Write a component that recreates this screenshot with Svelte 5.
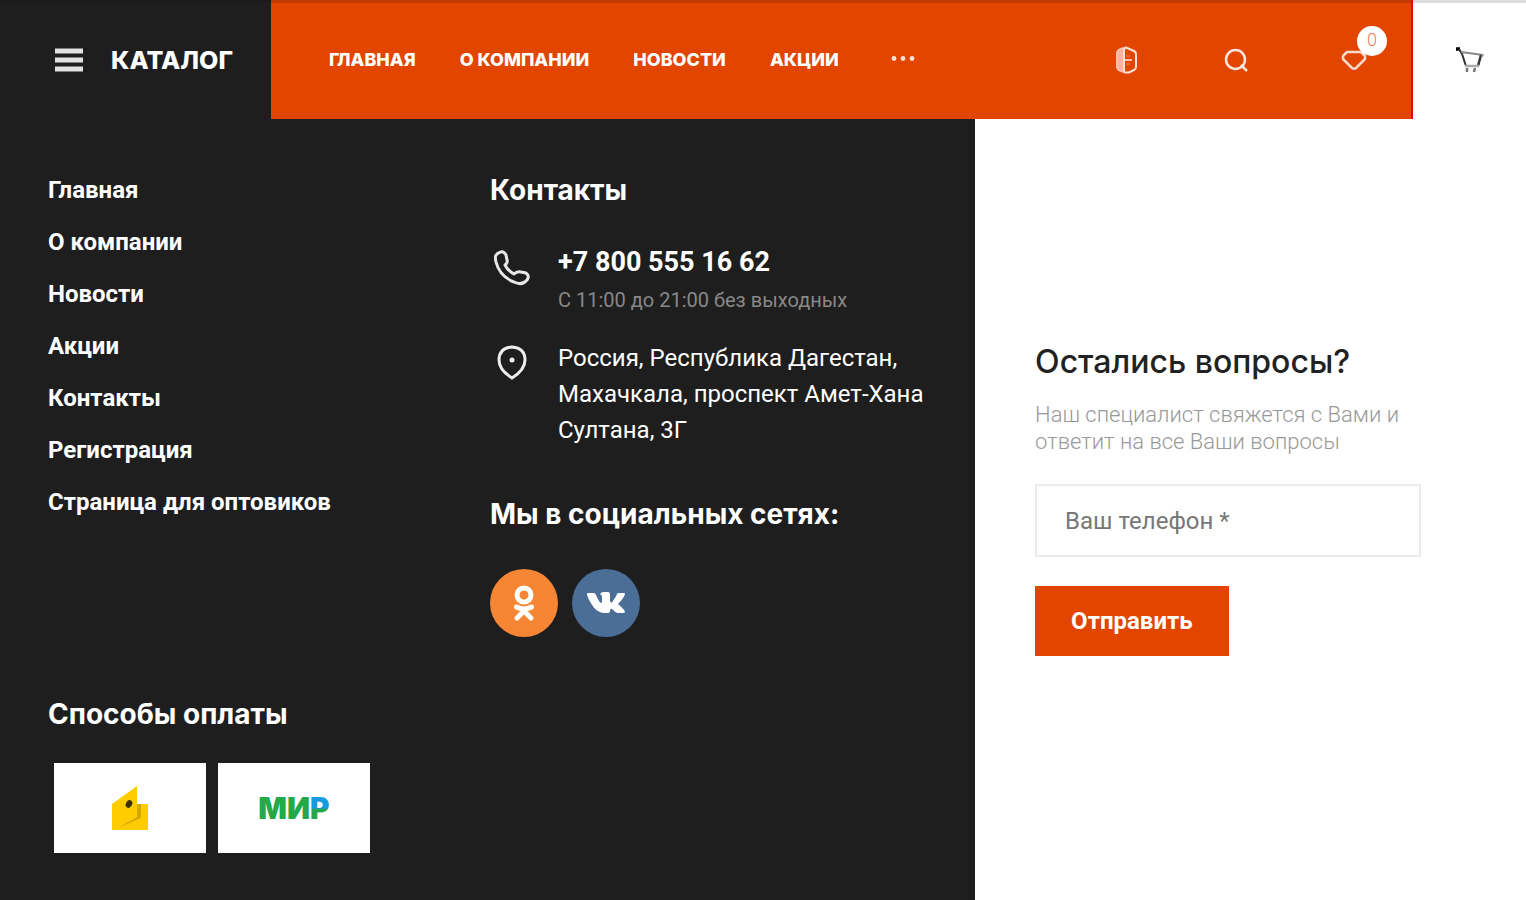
<script>
  const nav = ['Главная', 'О компании', 'Новости', 'Акции'];
  const menu = ['Главная', 'О компании', 'Новости', 'Акции', 'Контакты', 'Регистрация', 'Страница для оптовиков'];
  let phone = $state('');
</script>

<div class="page">
  <header>
    <button class="catalog" type="button">
      <svg width="28" height="24" viewBox="0 0 28 24" aria-hidden="true">
        <path d="M0 3h28M0 12h28M0 21h28" stroke="#e2e2e2" stroke-width="5" />
      </svg>
      Каталог
    </button>
    <div class="bar">
      <nav>
        {#each nav as item}
          <a href="#top">{item}</a>
        {/each}
        <button class="more" type="button" aria-label="Ещё">
          <svg width="24" height="8" viewBox="0 0 24 8" fill="#ffe3d8">
            <circle cx="3" cy="2.500" r="2.400" /><circle cx="12" cy="2.500" r="2.400" /><circle cx="21" cy="2.500" r="2.400" />
          </svg>
        </button>
      </nav>
      <div class="tools">
        <button type="button" aria-label="Сравнение">
          <svg width="24" height="28" viewBox="0 0 24 28" fill="none" stroke="#ffe0d6" stroke-width="2">
            <path d="M10 2v24C5 25 3 24 3 21V7c0-3 2-4 7-5z" fill="#f8b49c" stroke="#f9c0ab" />
            <path d="M10 26V3l2-1.500L20 5q2 1 2 3v13q0 2-2 3l-5 2.500h-5" />
            <path d="M11 14h7" stroke="#f9bfa8" /><path d="M12 10h4M12 18h4" stroke="#f0855c" stroke-width="1" />
          </svg>
        </button>
        <button type="button" aria-label="Поиск">
          <svg width="24" height="26" viewBox="0 0 24 26" fill="none" stroke="#ffe6dd" stroke-width="2.500">
            <circle cx="11.500" cy="12.500" r="9.500" /><path d="M17 18l6 6" />
          </svg>
        </button>
        <button class="heart" type="button" aria-label="Избранное">
          <svg width="26" height="22" viewBox="0 0 26 22" fill="none" stroke="#ffd9cc" stroke-width="2.500" stroke-linejoin="round">
            <path d="M6 3h14l4 4v3L15 19q-2 1.500-4 0L2 10V7z" />
          </svg>
          <span class="badge">0</span>
        </button>
      </div>
    </div>
    <button class="cart" type="button" aria-label="Корзина">
      <svg width="30" height="28" viewBox="0 0 30 28" fill="none" stroke="#333" stroke-width="2">
        <path d="M1 3h4" stroke="#000" stroke-width="3.500" /><path d="M4 3l3 5 4 12" />
        <path d="M6 6l22 3" stroke="#888" /><path d="M26 9l-3 11" stroke-width="2.500" /><path d="M28 8l-1 3" stroke="#999" />
        <path d="M10 20h14" stroke="#aaa" stroke-width="2.500" /><path d="M12 22v4M20 22l-1 4" stroke="#777" stroke-width="2.500" />
      </svg>
    </button>
  </header>

  <main>
    <div class="dark">
      <ul class="menu">
        {#each menu as item}
          <li><a href="#top">{item}</a></li>
        {/each}
      </ul>

      <div class="contacts">
        <h2>Контакты</h2>
        <div class="row tel">
          <svg width="36" height="38" viewBox="0 0 36 38" fill="none" stroke="#e8e8e8" stroke-width="3" stroke-linejoin="round">
            <path d="M3 4Q9-1 12 5l1 5q1 3-2 5 3 6 9 9 3-3 7-2l5 1q4 3 1 7-5 6-13 2C10 28 4 20 2 12 1 7 1 6 3 4z" />
          </svg>
          <div>
            <a class="phone" href="tel:+78005551662">+7 800 555 16 62</a>
            <p class="hours">С 11:00 до 21:00 без выходных</p>
          </div>
        </div>
        <div class="row place">
          <svg width="36" height="38" viewBox="0 0 36 38" fill="none" stroke="#eee" stroke-width="3">
            <path d="M18 3q13 1 13 13c0 8-5 13-13 18C10 29 5 24 5 16Q5 4 18 3z" /><circle cx="18" cy="16" r="2.500" fill="#eee" stroke="none" />
          </svg>
          <address>Россия, Республика Дагестан, Махачкала, проспект Амет-Хана Султана, 3Г</address>
        </div>
        <h2>Мы в социальных сетях:</h2>
        <div class="social">
          <a class="ok" href="#ok" aria-label="Одноклассники">
            <svg width="24" height="38" viewBox="0 0 24 38" fill="none" stroke="#fff" stroke-width="5" stroke-linecap="round" stroke-linejoin="round">
              <circle cx="12" cy="11" r="7" /><path d="M4.500 23q7.500 4 15 0M12 27l-7 7M12 27l7 7" />
            </svg>
          </a>
          <a class="vk" href="#vk" aria-label="ВКонтакте">
            <svg width="38" height="24" viewBox="0 0 38 24" fill="#fff">
              <path d="M1 2h6q1 0 2 2 3 7 5 8 1 0 1-2V6q0-2-2-3 1-2 4-2h4q2 0 2 3v6q1 3 3 0 3-4 4-7 0-1 2-1h5q1 0 1 1-1 4-7 10 7 6 7 8 0 1-2 1h-5q-2 0-6-4-2-1-2 2 0 2-2 2h-3C9 22 4 14 0 4q-1-2 1-2z" />
            </svg>
          </a>
        </div>
      </div>

      <section class="pay">
        <h2>Способы оплаты</h2>
        <div class="cards">
          <div class="card">
            <svg width="38" height="46" viewBox="0 0 38 46" role="img" aria-label="Кошелёк">
              <path d="M1 19L26 1v18h11v26H1z" fill="#fc0" />
              <path d="M26 19h4v14L7 43l19-11z" fill="#d6a800" />
              <ellipse cx="18" cy="19" rx="3" ry="4" transform="rotate(30 18 19)" fill="#3a3000" />
            </svg>
          </div>
          <div class="card mir"><span>МИ</span><span class="r">Р</span></div>
        </div>
      </section>
    </div>

    <form onsubmit={(e) => e.preventDefault()}>
      <h1>Остались вопросы?</h1>
      <p>Наш специалист свяжется с Вами и ответит на все Ваши вопросы</p>
      <input type="tel" aria-label="Ваш телефон" placeholder="Ваш телефон *" bind:value={phone} />
      <button type="submit">Отправить</button>
    </form>
  </main>
</div>

<style>
  :global(body) { margin: 0; background: #fff; }
  .page { min-height: 100vh; display: flex; flex-direction: column; font-family: Roboto, sans-serif; color: #fff; }
  .page * { box-sizing: border-box; }
  button { font: inherit; color: inherit; background: none; border: 0; padding: 0; cursor: pointer; }
  a { color: inherit; text-decoration: none; }
  svg { display: block; flex: none; }
  h1, h2, p, ul { margin: 0; padding: 0; }
  h2 { font: 700 28px/32px Inter, sans-serif; }

  header { display: flex; height: 119px; box-shadow: inset 0 3px #0002; }
  .catalog { width: 271px; display: flex; align-items: center; gap: 28px; padding-left: 55px; background: #1e1e1e; font: 800 25px/32px Inter, sans-serif; text-transform: uppercase; }
  .bar { flex: 1; display: flex; align-items: center; justify-content: space-between; padding: 0 37px 0 58px; background: #e14500; border-right: 2px solid #e10a00; }
  .catalog, .bar { box-shadow: inset 0 3px #0002; }
  nav { display: flex; align-items: center; gap: 44px; font: 800 18px/24px Inter, sans-serif; text-transform: uppercase; }
  .more { margin-left: 8px; }
  .tools { display: flex; align-items: center; gap: 86px; }
  .heart { position: relative; width: 40px; display: flex; justify-content: center; }
  .badge { position: absolute; left: 23px; top: -23px; width: 30px; height: 30px; border-radius: 50%; background: #fff; color: #e87b5c; font: 300 18px/28px Roboto, sans-serif; }
  .cart { width: 113px; display: flex; align-items: center; justify-content: center; }

  main { flex: 1; display: grid; grid-template-columns: 639fr 361fr; }
  .dark { display: grid; grid-template-columns: 442px 1fr; grid-template-rows: 524px auto; padding: 55px 48px 40px; background: #1e1e1e; }
  .menu { list-style: none; display: flex; flex-direction: column; gap: 20px; font-weight: 700; font-size: 24px; line-height: 32px; }
  .row { display: flex; gap: 28px; padding-left: 4px; }
  .row svg { margin-top: 8px; }
  .tel { margin-top: 36px; }
  .place { margin: 22px 0 50px; }
  .place svg { margin-top: 4px; }
  .phone { font-weight: 700; font-size: 27px; line-height: 40px; }
  .hours { font-size: 20px; line-height: 36px; color: #888; }
  address { font-style: normal; font-size: 24px; line-height: 36px; }
  .social { display: flex; gap: 14px; margin-top: 39px; }
  .social a { width: 68px; height: 68px; border-radius: 50%; display: grid; place-items: center; }
  .ok { background: #f68634; }
  .vk { background: #4b6e97; }
  .pay { grid-column: 1 / -1; }
  .cards { display: flex; gap: 12px; margin: 33px 0 0 6px; }
  .card { width: 152px; height: 90px; display: flex; align-items: center; justify-content: center; background: #fff; }
  .mir { font: 900 30px/32px Inter, sans-serif; color: #24a84a; }
  .r { color: transparent; background: linear-gradient(#159be0 50%, #24a84a 55%); background-clip: text; }

  form { display: flex; flex-direction: column; align-items: flex-start; padding: 226px 60px 40px; color: #222; }
  h1 { font: 500 32px/34px Inter, sans-serif; }
  form p { margin: 22px 0 29px; max-width: 386px; font-weight: 300; font-size: 22px; line-height: 27px; color: #999; }
  input { width: 100%; max-width: 386px; height: 73px; padding: 0 28px; border: 2px solid #ececec; background: #fff; font: 400 24px/32px Roboto, sans-serif; color: #222; }
  input::placeholder { color: #777; opacity: 1; }
  form button { margin-top: 29px; height: 70px; padding: 0 36px; background: #e14500; color: #fff; font: 700 24px/32px Roboto, sans-serif; }
</style>
